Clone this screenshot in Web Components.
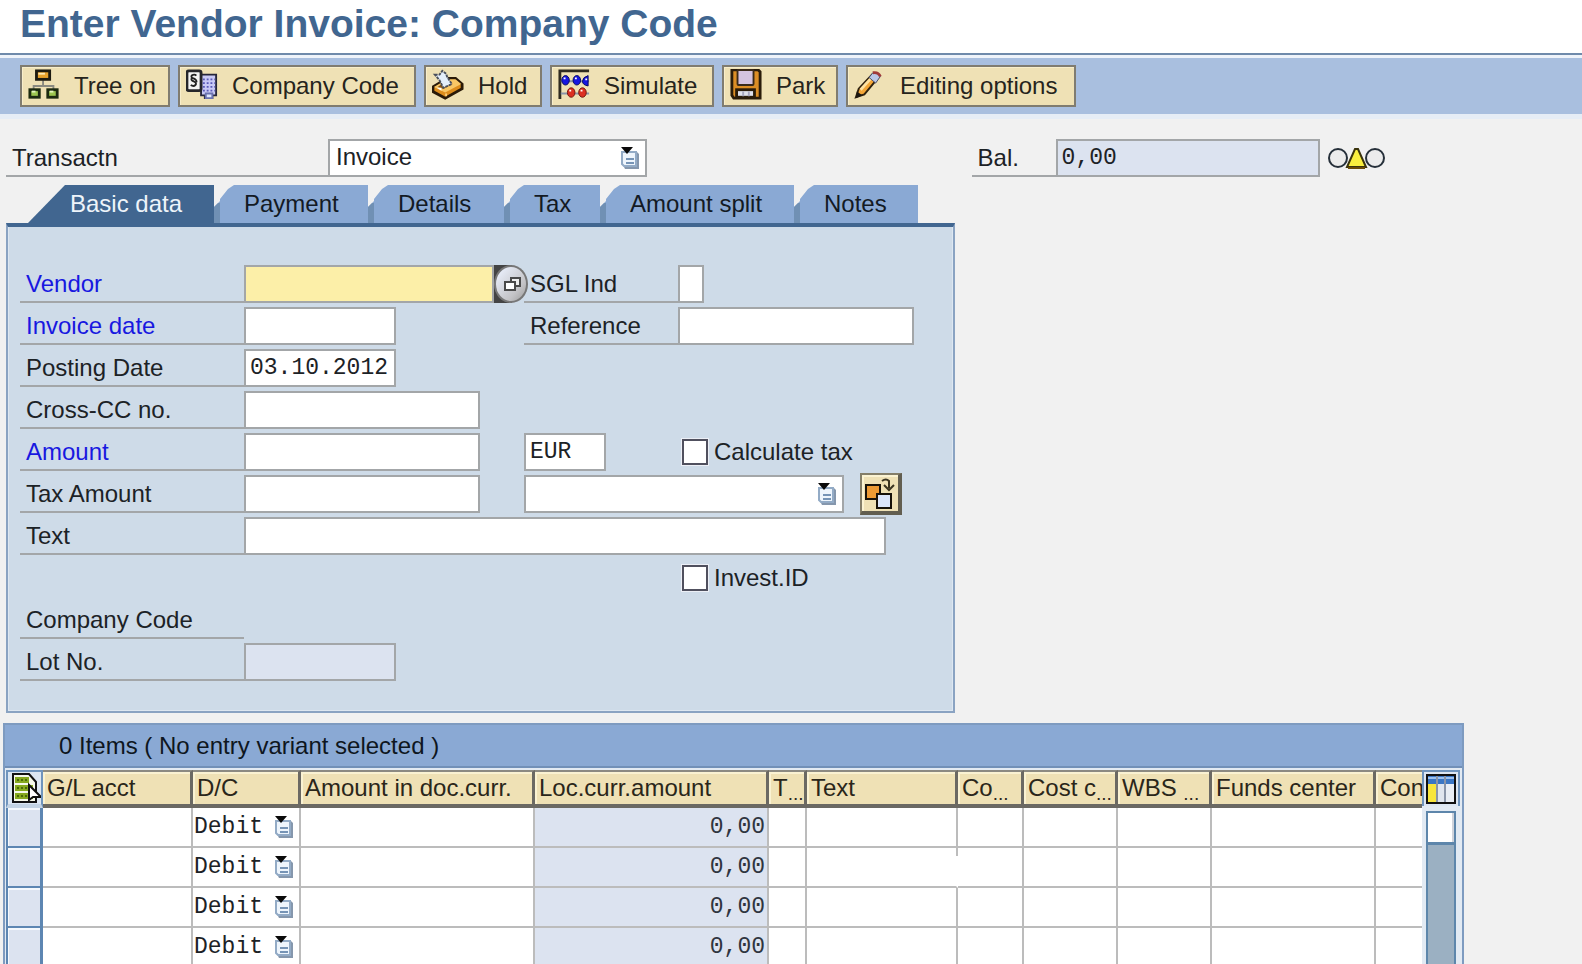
<!DOCTYPE html>
<html lang="en">
<head>
<meta charset="utf-8">
<title>Enter Vendor Invoice: Company Code</title>
<style>
  html, body { height: 100%; margin: 0; }
  body {
    background: #f1f1f1; color: #1c2226; overflow: hidden;
    font: 24px/38px "Liberation Sans", Arial, sans-serif;
    --mono: 23px "Liberation Mono", "Courier New", monospace;
    --line: #a3a6a8; --sand: #efe1b5; --navy: #416690; --tab: #8aa9d4; --readonly: #dce3f0;
  }
</style>
</head>
<body>
<invoice-screen></invoice-screen>
<script>
const ICONS = {
  tree: `<path d="M16 12v6M6 23v-5h21v5" fill="none" stroke="#8a8a80" stroke-width="2"/>
    <rect x="9" y="2" width="14" height="9" fill="#e8a22c" stroke="#1c1a10" stroke-width="3"/><path d="M11 5h7" stroke="#ffe9b0" stroke-width="2"/>
    <rect x="2" y="22" width="10" height="8" fill="#9cc650" stroke="#1c2a10" stroke-width="3"/><path d="M4 24h4" stroke="#e2f5bd" stroke-width="2"/>
    <rect x="21" y="22" width="10" height="8" fill="#9cc650" stroke="#1c2a10" stroke-width="3"/><path d="M23 24h4" stroke="#e2f5bd" stroke-width="2"/>`,
  company: `<path d="M16 6h16v22h-4v3h-8v-3h-4z" fill="#c9c9f5" stroke="#26263a" stroke-width="2"/>
    <path d="M18 11h13M18 15h13M18 19h13M18 23h13" stroke="#5a5ab8" stroke-width="2" stroke-dasharray="2 2"/><path d="M21 26h7v5h-7z" fill="#dfe6ff" stroke="#6a72b0" stroke-width="2"/>
    <rect x="1" y="2" width="15" height="21" rx="2" fill="#f4f4f4" stroke="#26262a" stroke-width="3"/>
    <path d="M11 7q-2-2-5 0q-1 2 2 3q4 2 3 4M6 10q-1 2 2 3q4 2 2 4q-2 2-5 0" fill="none" stroke="#222" stroke-width="2"/>`,
  hold: `<path d="M1 19L16 10L25 10L32 16V21L14 31L1 24Z" fill="#dd8d1d" stroke="#2a1a08" stroke-width="3"/>
    <path d="M2 19L16 11L25 11L31 16L14 25Z" fill="#f9c766"/><path d="M6 19L16 12L22 16L12 21Z" fill="#8a5414"/><path d="M5 20l5 0 0 3z" fill="#fff"/>
    <path d="M15 26v3" stroke="#ffd07a" stroke-width="2"/><path d="M3 6l5 0 3-4 4 3 1 3 5 8-9 4-4-8z" fill="#e4eefb" stroke="#4a4f5c" stroke-width="2" stroke-dasharray="3 1"/>`,
  simulate: `<path d="M33 2H2V32" fill="none" stroke="#2f2b20" stroke-width="3"/><path d="M3 13h30M3 26h30" stroke="#8b95a8" stroke-width="2"/>
    <g fill="#1616e0" stroke="#06065c"><ellipse cx="8" cy="12" rx="4" ry="5"/><ellipse cx="20" cy="12" rx="4" ry="5"/><path d="M32 7v11q-6-1-6-5t6-6z"/></g>
    <g fill="#dc3022" stroke="#701008"><ellipse cx="14" cy="25" rx="4" ry="5"/><ellipse cx="26" cy="25" rx="4" ry="5"/></g>
    <path d="M6 10h2M18 10h2M29 11h2M12 23h2M24 23h2" stroke="#fff" stroke-width="2"/>`,
  park: `<path d="M2 1h28l2 2v28H4l-2-3z" fill="#dc8e25" stroke="#2a1c0a" stroke-width="3"/><rect x="8" y="1" width="17" height="16" rx="1" fill="#d4c3df" stroke="#3a2a1a" stroke-width="2"/>
    <rect x="7" y="22" width="19" height="8" fill="#dfe1ec" stroke="#2a1c0a" stroke-width="3"/><path d="M14 24v5M20 24v5" stroke="#a5a5bd" stroke-width="2"/>`,
  pencil: `<path d="M2 30L5 21L19 6q4-2 7 3L11 27Z" fill="#f3a638" stroke="#30220e" stroke-width="2"/><path d="M7 22L18 10" stroke="#ffe2a0" stroke-width="3"/>
    <path d="M16 9L20 4q6-1 8 4L23 15Z" fill="#b9c7e8" stroke="#454a68"/><path d="M20 4q6-1 8 4" stroke="#a03a3a" stroke-width="3" fill="none"/><path d="M2 31l1-7 6 4z" fill="#1c1710"/>`,
  list: `<path d="M5 5h11l2 2v15H4l-1-2z" fill="#8597ad"/><path d="M1 5h14v14H3l-2-2z" fill="#eef5fc" stroke="#93abc6" stroke-width="2"/>
    <path d="M5 12h8M5 16h8" stroke="#7694b6" stroke-width="2"/><path d="M0 0h12L6 7z" fill="#0a0a0a"/>`,
  lights: `<g fill="#ececec" stroke="#26303a" stroke-width="2"><circle cx="10" cy="11" r="9"/><circle cx="47" cy="11" r="9"/></g><path d="M27 2h3L38 20H19Z" fill="#f9ee3e" stroke="#3a330c" stroke-width="2"/><path d="M20 21h17" stroke="#6a4a08" stroke-width="2"/>`,
  search: `<path d="M0 0h18v38H0z" fill="#444"/><ellipse cx="17" cy="19" rx="17" ry="19" fill="#777"/><ellipse cx="17" cy="19" rx="15" ry="17" fill="url(#ball)"/>
    <defs><linearGradient id="ball" x2="1" y2="1"><stop offset=".1" stop-color="#e9eefa"/><stop offset=".7" stop-color="#c3c3c6"/><stop offset="1" stop-color="#9c9c9c"/></linearGradient></defs>
    <g fill="#eee" stroke="#4a4a4a" stroke-width="2"><path d="M17 13h9v8h-9z"/><path d="M11 17h10v8H11z" fill="#fff"/></g>`,
  copy: `<g stroke="#17120a" stroke-width="2"><path d="M3 9h14v14H3z" fill="#ed9a34"/><path d="M14 18h14v14H14z" fill="#dbe6fb"/></g><path d="M19 5q4-3 7 0v7M21 9l5 5 5-5" fill="none" stroke="#3a3420" stroke-width="2"/>`,
  selectAll: `<path d="M2 2h16l7 8v20H2z" fill="#f6f8ea" stroke="#111" stroke-width="2"/><path d="M4 5h14v6H4zM4 13h18v6H4zM4 21h18v6H4z" fill="#86a81e"/>
    <path d="M6 8h11M6 16h12M6 24h12" stroke="#4c6a08" stroke-width="2" stroke-dasharray="2 2"/><path d="M18 13v15l4-3 8 0z" fill="#fff" stroke="#111" stroke-width="2"/>`,
  columns: `<path d="M1 1h28v28H1z" fill="#fff"/><path d="M2 2h26v8H2z" fill="#3a76c4"/><path d="M2 4h26" stroke="#9cc2f0" stroke-width="2"/><path d="M2 10h10v18H2z" fill="#f8e53c"/><path d="M12 10h8v18h-8z" fill="#dfe5ee"/><path d="M20 10h8v18h-8z" fill="#e8edf4"/>
    <path d="M11 2v26M19 2v26" stroke="#8a95a8" stroke-width="2"/><path d="M1 1h28v28H1z" fill="none" stroke="#111" stroke-width="2"/>`
};
/* w and h are the drawn size, box is the size of the artwork when it differs. */
const icon = (name, w, h, box = `${w} ${h}`) => `<svg width="${w}" height="${h}" viewBox="0 0 ${box}" aria-hidden="true">${ICONS[name]}</svg>`;

class Base extends HTMLElement {
  connectedCallback() {
    if (this.shadowRoot) return;
    this.attachShadow({ mode: "open" }).innerHTML =
      `<style>*{box-sizing:border-box} button,input,select{font:inherit;color:inherit;margin:0;border-radius:0} svg{display:block;flex:none}</style>` + this.view();
  }
  attr(name, fallback = "") { return this.getAttribute(name) ?? fallback; }
}

customElements.define("page-heading", class extends Base {
  view() { return `<style>
    :host { display: block; background: #fff; border-bottom: 2px solid #6f8aab; padding: 0 20px; }
    h1 { margin: 0; height: 53px; font: bold 39px/47px "Liberation Sans", Arial, sans-serif; color: var(--navy); white-space: nowrap; }
  </style><h1><slot></slot></h1>`; }
});

customElements.define("tool-bar", class extends Base {
  view() { return `<style>
    :host { display: flex; gap: 8px; padding: 7px 20px; background: #a9bfdf; border-top: 3px solid #eef3fa; border-bottom: 5px solid #e6edf6; }
  </style><slot></slot>`; }
});

customElements.define("tool-button", class extends Base {
  view() { return `<style>
    :host { display: block; min-width: var(--w); }
    button { display: flex; align-items: center; gap: 14px; width: 100%; height: 42px; padding: 0 10px 0 6px; background: var(--sand);
      border: 2px solid #807c70; color: #26241c; white-space: nowrap; line-height: 38px; box-shadow: inset 1px 1px #f8eecb; }
    svg { margin-bottom: 2px; }
  </style><button type="button">${icon(this.attr("icon"), 32, 32, "34 34")}<span><slot></slot></span></button>`; }
});

/* One label with its control: kind is text, select or none. */
customElements.define("form-field", class extends Base {
  view() {
    const kind = this.attr("kind", "text"), label = this.attr("label"), value = this.attr("value");
    const name = this.attr("name", label), aria = label ? "" : `aria-label="${name}"`;
    let control = "";
    if (kind === "text") control = `<input id="c" ${aria} value="${value}" ${this.hasAttribute("readonly") ? "readonly" : ""}>`;
    if (kind === "select") control = `<span class="drop"><select id="c" ${aria}><option>${value}</option></select>${icon("list", 18, 22)}</span>`;
    if (this.hasAttribute("search")) control += `<button type="button" aria-label="Search ${label}">${icon("search", 34, 38)}</button>`;
    const tag = kind === "none" ? "span" : "label";
    return `<style>
      :host { display: flex; height: 38px; min-width: 0; }
      .label { flex: none; width: var(--label, 224px); height: 38px; padding-left: 6px; border-bottom: 2px solid var(--line); white-space: nowrap; }
      :host([required]) .label { color: #1818e0; }
      input, select { flex: none; width: var(--field, 236px); height: 38px; padding: 0 4px; border: 2px solid var(--line); background: #fff; font: var(--mono); outline: 0; }
      :host([search]) input { background: #fcefa8; }
      :host([readonly]) input { background: var(--readonly); }
      .drop { position: relative; display: flex; }
      select { appearance: none; font: 24px "Liberation Sans", Arial, sans-serif; padding: 0 6px 4px; }
      .drop svg { position: absolute; right: 8px; top: 8px; pointer-events: none; }
      button { padding: 0; border: 0; background: none; flex: none; }
    </style>${label ? `<${tag} class="label" ${kind === "none" ? "" : 'for="c"'}>${label}</${tag}>` : ""}${control}`;
  }
});

customElements.define("check-field", class extends Base {
  view() { return `<style>
    :host { display: flex; }
    label { display: flex; align-items: center; gap: 6px; height: 38px; padding-left: 4px; white-space: nowrap; }
    input { appearance: none; width: 26px; height: 26px; border: 2px solid #50505e; background: #fff; outline: 1px solid #eceff6; }
  </style><label><input type="checkbox"><span><slot></slot></span></label>`; }
});

customElements.define("tab-strip", class extends Base {
  view() {
    const tabs = [["Basic data", 186], ["Payment", 154], ["Details", 136], ["Tax", 96], ["Amount split", 194], ["Notes", 124]];
    return `<style>
      :host { display: flex; padding-left: 22px; }
      button { height: 38px; border: 0; padding: 0 0 1px 30px; text-align: left; white-space: nowrap; line-height: 37px; color: #131a24;
        background: linear-gradient(90deg, #7090b4 6px, transparent 6px) 0 100% / 100% 20px no-repeat, var(--tab);
        clip-path: polygon(0 100%, 0 22px, 6px 16px, 6px 14px, 14px 4px, 20px 0, 100% 0, 100% 100%); }
      button[aria-selected=true] { padding-left: 42px; background: var(--navy); color: #eef4fa; clip-path: polygon(0 100%, 37px 0, 100% 0, 100% 100%); }
    </style>${tabs.map(([t, w], i) => `<button type="button" role="tab" aria-selected="${i === 0}" style="min-width:${w}px">${t}</button>`).join("")}`;
  }
});

customElements.define("basic-data", class extends Base {
  view() { return `<style>
    :host { display: block; background: #cedbe8; border: 2px solid #8aa3c2; border-top: 4px solid var(--navy); padding: 38px 12px 30px; box-shadow: inset 1px 0 #dde7f1, inset -1px -1px #dde7f1; }
    form { display: grid; grid-template-columns: 504px 154px 1fr; grid-auto-rows: 38px; row-gap: 4px; }
    .date { --field: 152px; } .wide { grid-column: 1 / -1; --field: 642px; } .pair { grid-column: 2 / -1; --label: 154px; }
    .first { grid-column: 1; } .third { grid-column: 3; }
    .tax { grid-column: 2 / -1; display: flex; gap: 16px; align-items: center; --field: 320px; }
    .tax button { flex: none; display: grid; place-items: center; width: 42px; height: 42px; padding: 0; background: var(--sand); border: 2px solid #847e68; border-width: 2px 4px 4px 2px; border-right-color: #625e50; border-bottom-color: #625e50; box-shadow: inset 2px 2px #fbf3d2; }
  </style><form>
    <form-field class="first" label="Vendor" required search style="--field:250px"></form-field>
    <form-field class="pair" label="SGL Ind" style="--field:26px"></form-field>
    <form-field class="first date" label="Invoice date" required></form-field>
    <form-field class="pair" label="Reference" style="--field:236px"></form-field>
    <form-field class="first date" label="Posting Date" value="03.10.2012"></form-field>
    <form-field class="first" label="Cross-CC no."></form-field>
    <form-field class="first" label="Amount" required></form-field>
    <form-field name="Currency" value="EUR" style="--field:82px"></form-field>
    <check-field>Calculate tax</check-field>
    <form-field class="first" label="Tax Amount"></form-field>
    <div class="tax"><form-field kind="select" name="Tax code"></form-field><button type="button" aria-label="Copy tax">${icon("copy", 34, 34)}</button></div>
    <form-field class="wide" label="Text"></form-field>
    <check-field class="third">Invest.ID</check-field>
    <form-field class="first" kind="none" label="Company Code"></form-field>
    <form-field class="first date" label="Lot No." readonly></form-field>
  </form>`; }
});

customElements.define("item-table", class extends Base {
  view() {
    const cols = [["G/L acct", 150], ["D/C", 108], ["Amount in doc.curr.", 234], ["Loc.curr.amount", 234], ["T", 38, 1], ["Text", 151], ["Co", 66, 1], ["Cost c", 94, 1], ["WBS ", 94, 1], ["Funds center", 164], ["Con", 0]];
    const cell = ([name], row) => {
      if (name === "D/C") return `<td><span class="drop"><select aria-label="D/C, row ${row}"><option>Debit</option></select>${icon("list", 18, 22)}</span></td>`;
      if (name === "Loc.curr.amount") return `<td class="num">0,00</td>`;
      return `<td${name === "Text" && row === 2 ? ' class="open"' : ""}><input aria-label="${name.trim()}, row ${row}"></td>`;
    };
    return `<style>
      :host { display: flex; flex-direction: column; border: 2px solid #7e9bc0; border-bottom: 0; background: #e2eaf3; overflow: hidden; }
      h2 { margin: 0; height: 43px; padding-left: 54px; font: inherit; line-height: 42px; background: var(--tab); border-bottom: 2px solid #7190b8; color: #0e1620; }
      .body { flex: 1; min-height: 0; display: flex; padding: 2px 2px 0 1px; }
      .view { flex: 1; min-width: 0; overflow: hidden; }
      table { width: 100%; table-layout: fixed; border-collapse: separate; border-spacing: 0; }
      th, td { padding: 0; font-weight: normal; text-align: left; overflow: hidden; white-space: nowrap; }
      thead th { height: 38px; background: var(--sand); color: #2a261a; border: solid #6b6963; border-width: 2px 3px 4px 0; border-top-color: #8c8a82; box-shadow: inset 2px 2px #faf2d2; }
      thead th:last-child { border-right: 0; }
      thead div { display: flex; height: 32px; padding-left: 4px; line-height: 32px; white-space: pre; }
      .dots { font-size: 19px; line-height: 44px; }
      thead th:first-child { background: #dce6f2; border: 2px solid #6f94bd; border-width: 2px 2px 4px; border-bottom-color: #c3d3e4; box-shadow: none; }
      thead button, .side button { display: block; padding: 0; border: 0; background: none; }
      thead button { padding-left: 3px; }
      td { height: 40px; background: #fff; border: solid #bcbcbc; border-width: 0 2px 2px 0; }
      td:last-child { border-right: 0; }
      tbody th { height: 40px; border: 2px solid #5d86b2; border-width: 0 3px 2px 2px; background: var(--readonly); }
      tbody th button { display: block; width: 100%; height: 38px; border: 0; background: var(--readonly); box-shadow: inset 1px 2px #f4f8fd; }
      td input, td select { display: block; width: 100%; height: 38px; border: 0; padding: 0 1px; background: none; font: var(--mono); outline: 0; }
      td select { appearance: none; }
      .num { font: var(--mono); text-align: right; padding-right: 2px; background: var(--readonly); color: #2f353f; }
      .open { border-right-color: transparent; background: linear-gradient(#bcbcbc, #bcbcbc) 100% 0 / 2px 8px no-repeat border-box #fff; }
      .drop { position: relative; display: block; }
      .drop svg { position: absolute; right: 6px; top: 8px; pointer-events: none; }
      .side { width: 38px; display: flex; flex-direction: column; align-items: center; gap: 5px; }
      .side .config { display: grid; place-items: center; width: 38px; height: 36px; border: 2px solid #6f94bd; border-bottom: 0; background: #dce6f2; }
      .track { flex: 1; width: 30px; border: 2px solid #5d86ab; border-bottom: 0; background: #9bb0c2; }
      .side .thumb { width: 100%; height: 32px; background: #fff; border-bottom: 3px solid #5d86ab; box-shadow: inset -2px 0 #d0d4dc; }
    </style>
    <h2>0 Items ( No entry variant selected )</h2>
    <div class="body"><div class="view"><table>
      <colgroup><col style="width:37px">${cols.map(c => `<col${c[1] ? ` style="width:${c[1]}px"` : ""}>`).join("")}</colgroup>
      <thead><tr><th><button type="button" aria-label="Select all">${icon("selectAll", 30, 32)}</button></th>
      ${cols.map(([t, , cut]) => `<th scope="col"><div><span>${t}</span>${cut ? '<span class="dots">...</span>' : ""}</div></th>`).join("")}</tr></thead>
      <tbody>${[1, 2, 3, 4].map(r => `<tr><th scope="row"><button type="button" aria-label="Select row ${r}"></button></th>${cols.map(c => cell(c, r)).join("")}</tr>`).join("")}</tbody>
    </table></div>
    <div class="side"><button class="config" type="button" aria-label="Configure columns">${icon("columns", 30, 30)}</button>
      <div class="track"><button class="thumb" type="button" aria-label="Scroll"></button></div></div></div>`;
  }
});

customElements.define("invoice-screen", class extends Base {
  view() { return `<style>
    :host { display: flex; flex-direction: column; height: 100vh; overflow: hidden; }
    .top { display: grid; grid-template-columns: 60% 1fr; column-gap: 20px; padding-top: 20px; margin-left: 6px; }
    .trans { --label: 322px; --field: 319px; }
    .bal { display: flex; align-items: center; gap: 8px; --label: 84px; --field: 264px; }
    tab-strip { margin: 8px 0 0 6px; }
    basic-data { width: 60%; margin-left: 6px; box-sizing: border-box; }
    item-table { flex: 1; min-height: 0; margin: 10px 118px 0 3px; }
  </style>
  <page-heading>Enter Vendor Invoice: Company Code</page-heading>
  <tool-bar>
    <tool-button icon="tree" style="--w:150px">Tree on</tool-button>
    <tool-button icon="company" style="--w:238px">Company Code</tool-button>
    <tool-button icon="hold" style="--w:118px">Hold</tool-button>
    <tool-button icon="simulate" style="--w:164px">Simulate</tool-button>
    <tool-button icon="park" style="--w:116px">Park</tool-button>
    <tool-button icon="pencil" style="--w:230px">Editing options</tool-button>
  </tool-bar>
  <div class="top">
    <form-field class="trans" kind="select" label="Transactn" value="Invoice"></form-field>
    <div class="bal"><form-field label="Bal." value="0,00" readonly></form-field>${icon("lights", 57, 22)}</div>
  </div>
  <tab-strip role="tablist"></tab-strip>
  <basic-data></basic-data>
  <item-table></item-table>`; }
});
</script>
</body>
</html>
